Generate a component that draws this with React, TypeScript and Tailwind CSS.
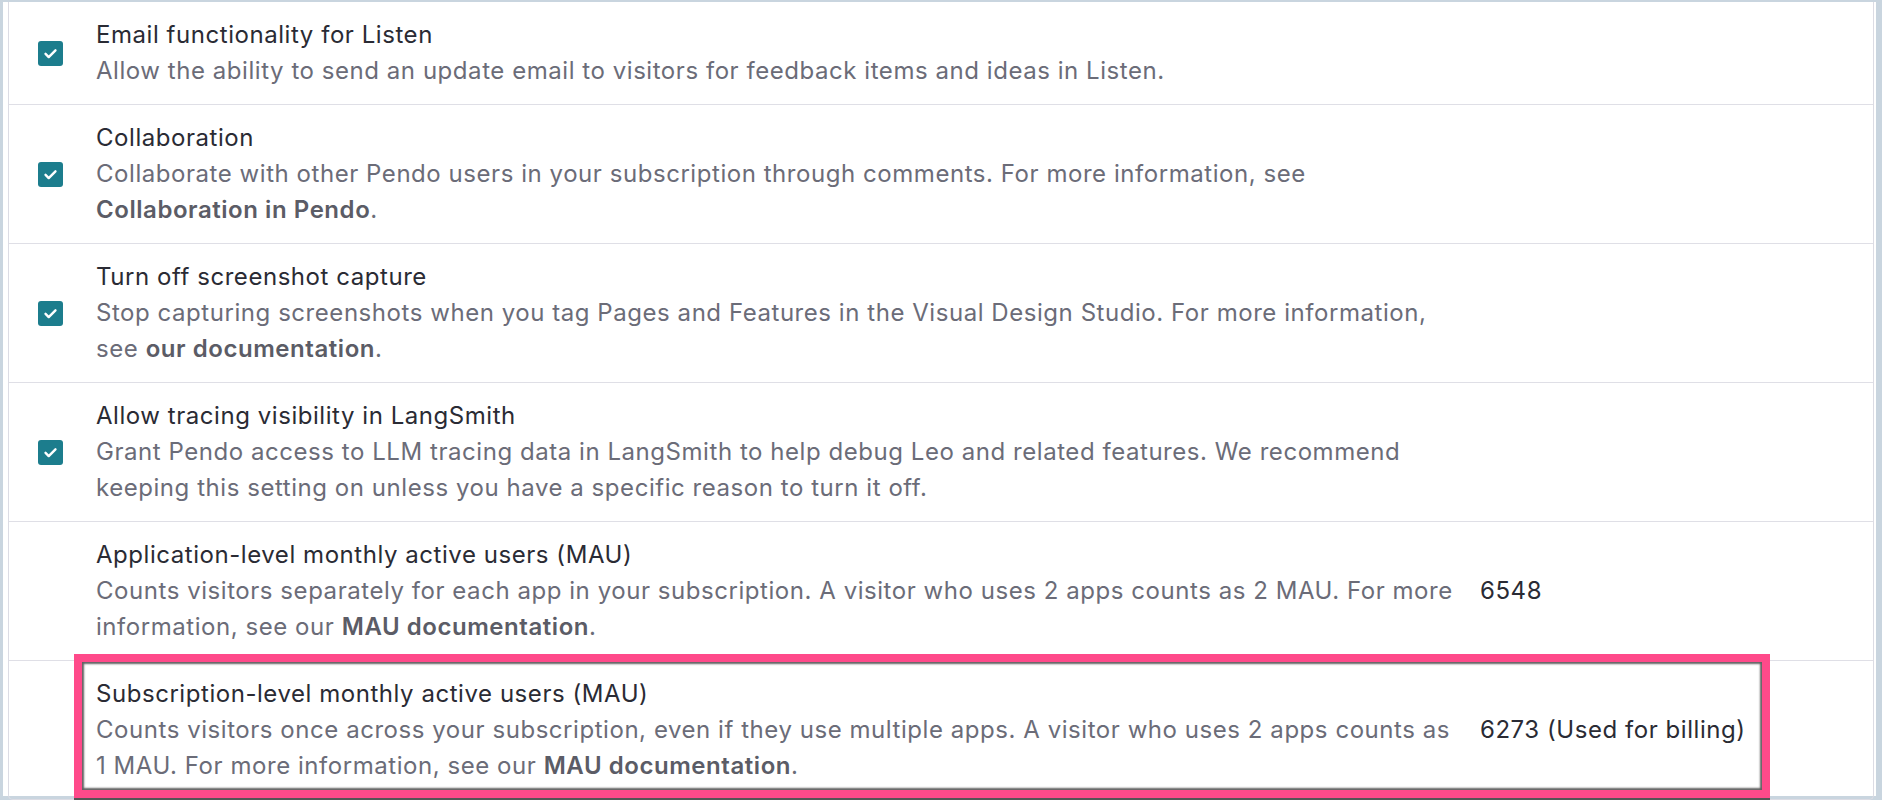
type Setting = {
  title: string
  desc: React.ReactNode
  checked?: boolean
  value?: string
}

const SETTINGS: Setting[] = [
  {
    title: 'Email functionality for Listen',
    desc: 'Allow the ability to send an update email to visitors for feedback items and ideas in Listen.',
    checked: true,
  },
  {
    title: 'Collaboration',
    desc: (
      <>
        Collaborate with other Pendo users in your subscription through comments. For more information, see{' '}
        <b className="font-semibold text-[#5b5c66]">Collaboration in Pendo</b>.
      </>
    ),
    checked: true,
  },
  {
    title: 'Turn off screenshot capture',
    desc: (
      <>
        Stop capturing screenshots when you tag Pages and Features in the Visual Design Studio. For more information, see{' '}
        <b className="font-semibold text-[#5b5c66]">our documentation</b>.
      </>
    ),
    checked: true,
  },
  {
    title: 'Allow tracing visibility in LangSmith',
    desc: 'Grant Pendo access to LLM tracing data in LangSmith to help debug Leo and related features. We recommend keeping this setting on unless you have a specific reason to turn it off.',
    checked: true,
  },
  {
    title: 'Application-level monthly active users (MAU)',
    desc: (
      <>
        Counts visitors separately for each app in your subscription. A visitor who uses 2 apps counts as 2 MAU. For more information, see our{' '}
        <b className="font-semibold text-[#5b5c66]">MAU documentation</b>.
      </>
    ),
    value: '6548',
  },
  {
    title: 'Subscription-level monthly active users (MAU)',
    desc: (
      <>
        Counts visitors once across your subscription, even if they use multiple apps. A visitor who uses 2 apps counts as 1 MAU. For more information, see our{' '}
        <b className="font-semibold text-[#5b5c66]">MAU documentation</b>.
      </>
    ),
    value: '6273 (Used for billing)',
  },
]

function Checkbox() {
  return (
    <div className="w-[25px] h-[25px] rounded-[3px] bg-[#1c7d8d] flex items-center justify-center">
      <svg width="17" height="17" viewBox="0 0 24 24" fill="none">
        <path d="M5 12.5l4.5 4.5L19 7.5" stroke="white" strokeWidth="3.4" strokeLinecap="round" strokeLinejoin="round" />
      </svg>
    </div>
  )
}

export default function App() {
  return (
    <div className="relative h-[800px] bg-[#c9d5df] pt-[3px] pl-[3px] pr-[6px] pb-[3px] font-['Inter','Noto_Sans',sans-serif] text-[24px] leading-[36px] tracking-[0.55px] overflow-hidden">
      <div className="h-full bg-white pl-[5px] pr-[2px] pb-[4px]">
        <div className="-mt-[1px] border-x border-b border-[#dcdce4] rounded-b-[5px]">
          {SETTINGS.map((s, i) => (
            <div
              key={s.title}
              className={`flex items-center pl-[29px] py-[15px] ${i < SETTINGS.length - 1 ? 'border-b border-[#dfdfe6]' : ''}`}
            >
              <div className="w-[25px] shrink-0">{s.checked && <Checkbox />}</div>
              <div className="ml-[33px] w-[1360px] shrink-0">
                <div className="text-[#2a2b34]">{s.title}</div>
                <div className="text-[#6b6c78]">{s.desc}</div>
              </div>
              {s.value && <div className="ml-[24px] text-[#2a2b34] whitespace-nowrap">{s.value}</div>}
            </div>
          ))}
        </div>
      </div>
      {/* annotation highlight */}
      <div className="absolute left-[74px] top-[654px] w-[1696px] h-[144px] border-[8px] border-[#ff4a8a] shadow-[inset_0_0_2px_2px_rgba(70,70,70,0.85),0_2px_0_#555]" />
    </div>
  )
}
